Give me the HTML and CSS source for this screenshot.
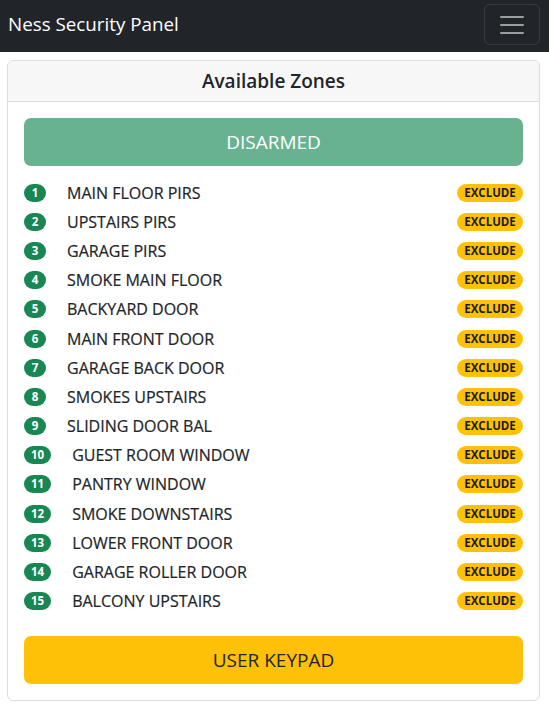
FILE: index.html
```html
<!DOCTYPE html>
<html lang="en">
<head>
<meta charset="utf-8">
<title>Ness Security Panel</title>
<link rel="stylesheet" href="styles.css">
</head>
<body>
<nav class="navbar">
  <span class="brand">Ness Security Panel</span>
  <button class="toggler" type="button" aria-label="Toggle navigation">
    <svg width="30" height="30" viewBox="0 0 30 30"><path d="M4 7h22M4 15h22M4 23h22" stroke="rgba(255,255,255,0.55)" stroke-width="2" stroke-linecap="round" fill="none"/></svg>
  </button>
</nav>
<main class="page">
  <section class="card">
    <div class="card-header">Available Zones</div>
    <div class="card-body">
      <button class="btn btn-status" type="button" disabled>DISARMED</button>
      <ul class="zones">
        <li class="zone"><span class="num">1</span><span class="name">MAIN FLOOR PIRS</span><span class="exclude">EXCLUDE</span></li>
        <li class="zone"><span class="num">2</span><span class="name">UPSTAIRS PIRS</span><span class="exclude">EXCLUDE</span></li>
        <li class="zone"><span class="num">3</span><span class="name">GARAGE PIRS</span><span class="exclude">EXCLUDE</span></li>
        <li class="zone"><span class="num">4</span><span class="name">SMOKE MAIN FLOOR</span><span class="exclude">EXCLUDE</span></li>
        <li class="zone"><span class="num">5</span><span class="name">BACKYARD DOOR</span><span class="exclude">EXCLUDE</span></li>
        <li class="zone"><span class="num">6</span><span class="name">MAIN FRONT DOOR</span><span class="exclude">EXCLUDE</span></li>
        <li class="zone"><span class="num">7</span><span class="name">GARAGE BACK DOOR</span><span class="exclude">EXCLUDE</span></li>
        <li class="zone"><span class="num">8</span><span class="name">SMOKES UPSTAIRS</span><span class="exclude">EXCLUDE</span></li>
        <li class="zone"><span class="num">9</span><span class="name">SLIDING DOOR BAL</span><span class="exclude">EXCLUDE</span></li>
        <li class="zone"><span class="num">10</span><span class="name">GUEST ROOM WINDOW</span><span class="exclude">EXCLUDE</span></li>
        <li class="zone"><span class="num">11</span><span class="name">PANTRY WINDOW</span><span class="exclude">EXCLUDE</span></li>
        <li class="zone"><span class="num">12</span><span class="name">SMOKE DOWNSTAIRS</span><span class="exclude">EXCLUDE</span></li>
        <li class="zone"><span class="num">13</span><span class="name">LOWER FRONT DOOR</span><span class="exclude">EXCLUDE</span></li>
        <li class="zone"><span class="num">14</span><span class="name">GARAGE ROLLER DOOR</span><span class="exclude">EXCLUDE</span></li>
        <li class="zone"><span class="num">15</span><span class="name">BALCONY UPSTAIRS</span><span class="exclude">EXCLUDE</span></li>
      </ul>
      <button class="btn btn-keypad" type="button">USER KEYPAD</button>
    </div>
  </section>
</main>
</body>
</html>
```

FILE: styles.css
```css
* { box-sizing: border-box; }

html, body {
  margin: 0;
  padding: 0;
  background: #fff;
  font-family: "Open Sans", "Noto Sans", Arial, sans-serif;
  color: #212529;
}

.navbar {
  height: 52px;
  background: #212529;
  display: flex;
  align-items: flex-start;
  justify-content: space-between;
  padding: 4px 9px 0 8px;
}

.brand {
  color: #fff;
  font-size: 18.8px;
  line-height: 41px;
  white-space: nowrap;
}

.toggler {
  width: 56px;
  height: 41px;
  padding: 0;
  background: transparent;
  border: 1px solid rgba(255, 255, 255, 0.1);
  border-radius: 6px;
  display: flex;
  align-items: center;
  justify-content: center;
}

.page {
  padding: 8px 9px 0 7px;
}

.card {
  border: 1px solid #dcdcdc;
  border-radius: 6px;
  overflow: hidden;
  height: 641px;
  display: flex;
  flex-direction: column;
}

.card-header {
  background: #f7f7f7;
  border-bottom: 1px solid #dcdcdc;
  height: 41px;
  line-height: 40px;
  text-align: center;
  font-size: 19px;
  font-weight: 600;
}

.card-body {
  padding: 16px;
  flex: 1;
  display: flex;
  flex-direction: column;
}

.btn {
  width: 100%;
  height: 48px;
  flex: none;
  border: 0;
  border-radius: 7px;
  font-family: inherit;
  font-size: 19px;
  padding: 0;
}

.btn-status {
  background: #69b291;
  color: #fff;
}

.btn-keypad {
  background: #ffc107;
  color: #212529;
  margin-top: auto;
}

.zones {
  list-style: none;
  margin: 12px 0 0;
  padding: 0;
}

.zone {
  display: flex;
  align-items: center;
  height: 29.2px;
}

.num {
  background: #198754;
  color: #fff;
  font-weight: 700;
  font-size: 11.5px;
  height: 18px;
  line-height: 18px;
  min-width: 22px;
  padding: 0 7px;
  border-radius: 9px;
  text-align: center;
  margin-right: 21px;
}

.name {
  flex: 1;
  font-size: 16px;
  color: #212529;
  -webkit-text-stroke: 0.2px #212529;
}

.exclude {
  background: #ffc107;
  color: #1b1b1b;
  font-weight: 700;
  font-size: 11.5px;
  height: 18px;
  line-height: 18px;
  width: 66px;
  text-align: center;
  border-radius: 9px;
}
```
